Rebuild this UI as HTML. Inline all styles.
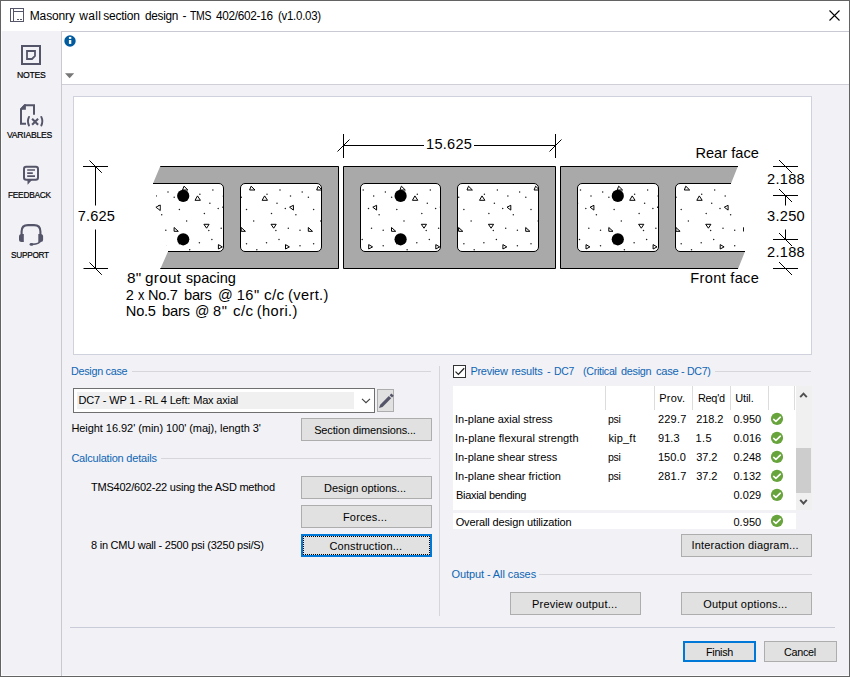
<!DOCTYPE html><html><head><meta charset="utf-8"><title>Masonry wall section design</title><style>

html,body{margin:0;padding:0}
body{width:850px;height:677px;overflow:hidden;background:#f1f1f6;font-family:"Liberation Sans",sans-serif;color:#000;position:relative}
.a{position:absolute}
.t{position:absolute;white-space:pre;font-family:"Liberation Sans",sans-serif;font-size:11px;transform-origin:0 50%}
.btn{position:absolute;box-sizing:border-box;background:#e1e1e1;border:1px solid #adadad}
.btn.def{border:2px solid #0078d7}
.hl{position:absolute;height:1px;background:#d6d6db}
.vl{position:absolute;width:1px;background:#d0d0d8}
svg{position:absolute;left:0;top:0;overflow:visible}

</style></head><body>
<div class="a" style="left:0;top:0;width:850px;height:677px;box-sizing:border-box;border:1px solid #636363"></div>
<div class="a" style="left:1px;top:1px;width:848px;height:30px;background:#fff"></div>
<div class="a" style="left:1px;top:31px;width:1px;height:645px;background:#fbfbfd"></div>
<div class="a" style="left:1px;top:675px;width:848px;height:1px;background:#fbfbfd"></div>
<div class="a" style="left:61px;top:31px;width:1px;height:645px;background:#c9c9d3"></div>
<div class="a" style="left:62px;top:31px;width:787px;height:54px;background:#fff;box-sizing:border-box;border-top:1px solid #c9c9d3;border-bottom:1px solid #cfcfd8"></div>
<div class="a" style="left:73px;top:96px;width:739px;height:259px;background:#fff;box-sizing:border-box;border:1px solid #cfd1dc"></div>
<div class="hl" style="left:132px;top:371px;width:299px"></div>
<div class="hl" style="left:161px;top:458px;width:270px"></div>
<div class="hl" style="left:715px;top:371px;width:96px"></div>
<div class="hl" style="left:539px;top:574px;width:273px"></div>
<div class="hl" style="left:70px;top:627px;width:765px;background:#c9cbd8"></div>
<div class="vl" style="left:439px;top:366px;height:250px;background:#d6d6da"></div>
<div class="a" style="left:73px;top:388px;width:302px;height:25px;box-sizing:border-box;border:1px solid #6f6f6f;background:#fff"></div>
<div class="a" style="left:77px;top:392px;width:277px;height:17px;background:#f0f0f0"></div>
<div class="btn " style="left:377px;top:389px;width:17px;height:23px"></div>
<div class="btn " style="left:301px;top:418px;width:131px;height:23px"></div>
<div class="btn " style="left:301px;top:476px;width:131px;height:23px"></div>
<div class="btn " style="left:301px;top:505px;width:131px;height:23px"></div>
<div class="btn def" style="left:301px;top:534px;width:131px;height:23px"></div>
<div class="a" style="left:303px;top:536px;width:127px;height:19px;box-sizing:border-box;border:1px dotted #000"></div>
<div class="btn " style="left:681px;top:534px;width:131px;height:23px"></div>
<div class="btn " style="left:510px;top:592px;width:131px;height:23px"></div>
<div class="btn " style="left:681px;top:592px;width:131px;height:23px"></div>
<div class="btn def" style="left:683px;top:641px;width:73px;height:21px"></div>
<div class="btn " style="left:764px;top:641px;width:73px;height:21px"></div>
<div class="a" style="left:453px;top:365px;width:13px;height:13px;box-sizing:border-box;border:1px solid #333;background:#fff"></div>
<div class="a" style="left:453px;top:386px;width:343px;height:124px;background:#fff"></div>
<div class="a" style="left:796px;top:386px;width:16px;height:124px;background:#f0f0f0"></div>
<div class="a" style="left:796px;top:448px;width:15px;height:45px;background:#cdcdcd"></div>
<div class="a" style="left:453px;top:513px;width:343px;height:16px;background:#fff"></div>
<div class="a" style="left:605px;top:386px;width:1px;height:24px;background:#dcdcdc"></div>
<div class="a" style="left:654px;top:386px;width:1px;height:24px;background:#dcdcdc"></div>
<div class="a" style="left:692px;top:386px;width:1px;height:24px;background:#dcdcdc"></div>
<div class="a" style="left:730px;top:386px;width:1px;height:24px;background:#dcdcdc"></div>
<div class="a" style="left:768px;top:386px;width:1px;height:24px;background:#dcdcdc"></div>
<div class="a" style="left:794px;top:386px;width:1px;height:24px;background:#dcdcdc"></div>
<svg width="850" height="677" viewBox="0 0 850 677">
<defs>
<clipPath id="k11"><path d="M153.5,184 L223,184 L223,251 L168,251 Z"/></clipPath>
<clipPath id="k12"><path d="M245.0,183.5 L317.0,183.5 A4.5,4.5 0 0 1 321.5,188.0 L321.5,247.0 A4.5,4.5 0 0 1 317.0,251.5 L245.0,251.5 A4.5,4.5 0 0 1 240.5,247.0 L240.5,188.0 A4.5,4.5 0 0 1 245.0,183.5 Z"/></clipPath>
<clipPath id="k21"><path d="M365.0,183.5 L436.0,183.5 A4.5,4.5 0 0 1 440.5,188.0 L440.5,247.0 A4.5,4.5 0 0 1 436.0,251.5 L365.0,251.5 A4.5,4.5 0 0 1 360.5,247.0 L360.5,188.0 A4.5,4.5 0 0 1 365.0,183.5 Z"/></clipPath>
<clipPath id="k22"><path d="M462.0,183.5 L534.0,183.5 A4.5,4.5 0 0 1 538.5,188.0 L538.5,247.0 A4.5,4.5 0 0 1 534.0,251.5 L462.0,251.5 A4.5,4.5 0 0 1 457.5,247.0 L457.5,188.0 A4.5,4.5 0 0 1 462.0,183.5 Z"/></clipPath>
<clipPath id="k31"><path d="M582.0,183.5 L654.0,183.5 A4.5,4.5 0 0 1 658.5,188.0 L658.5,247.0 A4.5,4.5 0 0 1 654.0,251.5 L582.0,251.5 A4.5,4.5 0 0 1 577.5,247.0 L577.5,188.0 A4.5,4.5 0 0 1 582.0,183.5 Z"/></clipPath>
<clipPath id="k32"><path d="M676,184 L731,184 L745,251 L676,251 Z"/></clipPath>
</defs>
<path d="M160.3,166 L339,166 L339,269 L160.3,269 L168,251.5 L153,183.5 Z" fill="#a9a9a9"/>
<path d="M140,183.5 L219,183.5 A4.5,4.5 0 0 1 223.5,188 L223.5,247 A4.5,4.5 0 0 1 219,251.5 L140,251.5 Z" fill="#fff"/>
<path d="M245.0,183.5 L317.0,183.5 A4.5,4.5 0 0 1 321.5,188.0 L321.5,247.0 A4.5,4.5 0 0 1 317.0,251.5 L245.0,251.5 A4.5,4.5 0 0 1 240.5,247.0 L240.5,188.0 A4.5,4.5 0 0 1 245.0,183.5 Z" fill="#fff"/>
<rect x="343.5" y="166.5" width="212" height="102" fill="#a9a9a9"/>
<path d="M365.0,183.5 L436.0,183.5 A4.5,4.5 0 0 1 440.5,188.0 L440.5,247.0 A4.5,4.5 0 0 1 436.0,251.5 L365.0,251.5 A4.5,4.5 0 0 1 360.5,247.0 L360.5,188.0 A4.5,4.5 0 0 1 365.0,183.5 Z M462.0,183.5 L534.0,183.5 A4.5,4.5 0 0 1 538.5,188.0 L538.5,247.0 A4.5,4.5 0 0 1 534.0,251.5 L462.0,251.5 A4.5,4.5 0 0 1 457.5,247.0 L457.5,188.0 A4.5,4.5 0 0 1 462.0,183.5 Z" fill="#fff"/>
<path d="M560,166 L738,166 L731,183.5 L745,251.5 L738,269 L560,269 Z" fill="#a9a9a9"/>
<path d="M582.0,183.5 L654.0,183.5 A4.5,4.5 0 0 1 658.5,188.0 L658.5,247.0 A4.5,4.5 0 0 1 654.0,251.5 L582.0,251.5 A4.5,4.5 0 0 1 577.5,247.0 L577.5,188.0 A4.5,4.5 0 0 1 582.0,183.5 Z" fill="#fff"/>
<path d="M680,183.5 L770,183.5 L770,251.5 L680,251.5 A4.5,4.5 0 0 1 675.5,247 L675.5,188 A4.5,4.5 0 0 1 680,183.5 Z" fill="#fff"/>
<g clip-path="url(#k11)"><g fill="#222"><circle cx="168.0" cy="191.9" r="0.75"/><circle cx="156.3" cy="196.1" r="0.75"/><circle cx="151.1" cy="208.5" r="0.75"/><circle cx="161.7" cy="214.7" r="0.75"/><circle cx="154.1" cy="228.2" r="0.75"/><circle cx="165.8" cy="230.2" r="0.75"/><circle cx="165.8" cy="245.7" r="0.75"/><circle cx="212.9" cy="190.0" r="0.75"/><circle cx="223.4" cy="196.1" r="0.75"/><circle cx="174.2" cy="197.2" r="0.75"/><circle cx="209.9" cy="203.3" r="0.75"/><circle cx="218.2" cy="208.5" r="0.75"/><circle cx="179.4" cy="209.6" r="0.75"/><circle cx="204.4" cy="213.6" r="0.75"/><circle cx="186.6" cy="221.0" r="0.75"/><circle cx="221.2" cy="228.2" r="0.75"/><circle cx="208.8" cy="230.4" r="0.75"/><circle cx="211.9" cy="239.5" r="0.75"/><circle cx="199.4" cy="242.8" r="0.75"/><circle cx="179.4" cy="243.7" r="0.75"/><circle cx="189.7" cy="249.8" r="0.75"/><circle cx="199.9" cy="194.2" r="0.75"/></g><g fill="#fff" stroke="#000" stroke-width="1"><path d="M155.4,207.2 L159.2,205.3 L159.2,210.1 Z"/><path d="M151.3,244.6 L151.3,249.0 L155.2,246.9 Z"/><path d="M182.5,190.0 L187.9,190.0 L184.0,186.2 Z"/><path d="M195.0,200.3 L200.4,200.3 L197.5,195.9 Z"/><path d="M222.5,207.2 L226.3,205.3 L226.3,210.1 Z"/><path d="M203.9,224.3 L209.1,224.3 L206.6,228.2 Z"/><path d="M174.1,231.3 L178.3,231.3 L174.1,227.5 Z"/><path d="M218.4,244.6 L218.4,249.0 L222.3,246.9 Z"/></g></g>
<g clip-path="url(#k12)"><g fill="#222"><circle cx="280.0" cy="190.0" r="0.75"/><circle cx="302.2" cy="191.9" r="0.75"/><circle cx="290.5" cy="196.1" r="0.75"/><circle cx="241.3" cy="197.2" r="0.75"/><circle cx="277.0" cy="203.3" r="0.75"/><circle cx="285.3" cy="208.5" r="0.75"/><circle cx="246.5" cy="209.6" r="0.75"/><circle cx="271.5" cy="213.6" r="0.75"/><circle cx="295.9" cy="214.7" r="0.75"/><circle cx="253.7" cy="221.0" r="0.75"/><circle cx="288.3" cy="228.2" r="0.75"/><circle cx="275.9" cy="230.4" r="0.75"/><circle cx="300.0" cy="230.2" r="0.75"/><circle cx="279.0" cy="239.5" r="0.75"/><circle cx="266.5" cy="242.8" r="0.75"/><circle cx="246.5" cy="243.7" r="0.75"/><circle cx="300.0" cy="245.7" r="0.75"/><circle cx="256.8" cy="249.8" r="0.75"/><circle cx="267.0" cy="194.2" r="0.75"/><circle cx="308.4" cy="197.2" r="0.75"/><circle cx="313.6" cy="209.6" r="0.75"/><circle cx="320.8" cy="221.0" r="0.75"/><circle cx="313.6" cy="243.7" r="0.75"/></g><g fill="#fff" stroke="#000" stroke-width="1"><path d="M249.6,190.0 L255.0,190.0 L251.1,186.2 Z"/><path d="M262.1,200.3 L267.5,200.3 L264.6,195.9 Z"/><path d="M289.6,207.2 L293.4,205.3 L293.4,210.1 Z"/><path d="M271.0,224.3 L276.2,224.3 L273.7,228.2 Z"/><path d="M241.2,231.3 L245.4,231.3 L241.2,227.5 Z"/><path d="M285.5,244.6 L285.5,249.0 L289.4,246.9 Z"/><path d="M316.7,190.0 L322.1,190.0 L318.2,186.2 Z"/><path d="M308.3,231.3 L312.5,231.3 L308.3,227.5 Z"/></g></g>
<g clip-path="url(#k21)"><g fill="#222"><circle cx="363.2" cy="190.0" r="0.75"/><circle cx="385.4" cy="191.9" r="0.75"/><circle cx="373.7" cy="196.1" r="0.75"/><circle cx="360.2" cy="203.3" r="0.75"/><circle cx="368.5" cy="208.5" r="0.75"/><circle cx="379.1" cy="214.7" r="0.75"/><circle cx="371.5" cy="228.2" r="0.75"/><circle cx="359.1" cy="230.4" r="0.75"/><circle cx="383.2" cy="230.2" r="0.75"/><circle cx="362.2" cy="239.5" r="0.75"/><circle cx="383.2" cy="245.7" r="0.75"/><circle cx="430.3" cy="190.0" r="0.75"/><circle cx="440.8" cy="196.1" r="0.75"/><circle cx="391.6" cy="197.2" r="0.75"/><circle cx="427.3" cy="203.3" r="0.75"/><circle cx="435.6" cy="208.5" r="0.75"/><circle cx="396.8" cy="209.6" r="0.75"/><circle cx="421.8" cy="213.6" r="0.75"/><circle cx="404.0" cy="221.0" r="0.75"/><circle cx="438.6" cy="228.2" r="0.75"/><circle cx="426.2" cy="230.4" r="0.75"/><circle cx="429.3" cy="239.5" r="0.75"/><circle cx="416.8" cy="242.8" r="0.75"/><circle cx="396.8" cy="243.7" r="0.75"/><circle cx="407.1" cy="249.8" r="0.75"/><circle cx="417.3" cy="194.2" r="0.75"/></g><g fill="#fff" stroke="#000" stroke-width="1"><path d="M372.8,207.2 L376.6,205.3 L376.6,210.1 Z"/><path d="M368.7,244.6 L368.7,249.0 L372.6,246.9 Z"/><path d="M399.9,190.0 L405.3,190.0 L401.4,186.2 Z"/><path d="M412.4,200.3 L417.8,200.3 L414.9,195.9 Z"/><path d="M439.9,207.2 L443.7,205.3 L443.7,210.1 Z"/><path d="M421.3,224.3 L426.5,224.3 L424.0,228.2 Z"/><path d="M391.5,231.3 L395.7,231.3 L391.5,227.5 Z"/><path d="M435.8,244.6 L435.8,249.0 L439.7,246.9 Z"/></g></g>
<g clip-path="url(#k22)"><g fill="#222"><circle cx="497.4" cy="190.0" r="0.75"/><circle cx="519.6" cy="191.9" r="0.75"/><circle cx="507.9" cy="196.1" r="0.75"/><circle cx="458.7" cy="197.2" r="0.75"/><circle cx="494.4" cy="203.3" r="0.75"/><circle cx="502.7" cy="208.5" r="0.75"/><circle cx="463.9" cy="209.6" r="0.75"/><circle cx="488.9" cy="213.6" r="0.75"/><circle cx="513.3" cy="214.7" r="0.75"/><circle cx="471.1" cy="221.0" r="0.75"/><circle cx="505.7" cy="228.2" r="0.75"/><circle cx="493.3" cy="230.4" r="0.75"/><circle cx="517.4" cy="230.2" r="0.75"/><circle cx="496.4" cy="239.5" r="0.75"/><circle cx="483.9" cy="242.8" r="0.75"/><circle cx="463.9" cy="243.7" r="0.75"/><circle cx="517.4" cy="245.7" r="0.75"/><circle cx="474.2" cy="249.8" r="0.75"/><circle cx="484.4" cy="194.2" r="0.75"/><circle cx="525.8" cy="197.2" r="0.75"/><circle cx="531.0" cy="209.6" r="0.75"/><circle cx="538.2" cy="221.0" r="0.75"/><circle cx="531.0" cy="243.7" r="0.75"/></g><g fill="#fff" stroke="#000" stroke-width="1"><path d="M467.0,190.0 L472.4,190.0 L468.5,186.2 Z"/><path d="M479.5,200.3 L484.9,200.3 L482.0,195.9 Z"/><path d="M507.0,207.2 L510.8,205.3 L510.8,210.1 Z"/><path d="M488.4,224.3 L493.6,224.3 L491.1,228.2 Z"/><path d="M458.6,231.3 L462.8,231.3 L458.6,227.5 Z"/><path d="M502.9,244.6 L502.9,249.0 L506.8,246.9 Z"/><path d="M534.1,190.0 L539.5,190.0 L535.6,186.2 Z"/><path d="M525.7,231.3 L529.9,231.3 L525.7,227.5 Z"/></g></g>
<g clip-path="url(#k31)"><g fill="#222"><circle cx="580.5" cy="190.0" r="0.75"/><circle cx="602.7" cy="191.9" r="0.75"/><circle cx="591.0" cy="196.1" r="0.75"/><circle cx="577.5" cy="203.3" r="0.75"/><circle cx="585.8" cy="208.5" r="0.75"/><circle cx="596.4" cy="214.7" r="0.75"/><circle cx="588.8" cy="228.2" r="0.75"/><circle cx="576.4" cy="230.4" r="0.75"/><circle cx="600.5" cy="230.2" r="0.75"/><circle cx="579.5" cy="239.5" r="0.75"/><circle cx="600.5" cy="245.7" r="0.75"/><circle cx="647.6" cy="190.0" r="0.75"/><circle cx="658.1" cy="196.1" r="0.75"/><circle cx="608.9" cy="197.2" r="0.75"/><circle cx="644.6" cy="203.3" r="0.75"/><circle cx="652.9" cy="208.5" r="0.75"/><circle cx="614.1" cy="209.6" r="0.75"/><circle cx="639.1" cy="213.6" r="0.75"/><circle cx="621.3" cy="221.0" r="0.75"/><circle cx="655.9" cy="228.2" r="0.75"/><circle cx="643.5" cy="230.4" r="0.75"/><circle cx="646.6" cy="239.5" r="0.75"/><circle cx="634.1" cy="242.8" r="0.75"/><circle cx="614.1" cy="243.7" r="0.75"/><circle cx="624.4" cy="249.8" r="0.75"/><circle cx="634.6" cy="194.2" r="0.75"/></g><g fill="#fff" stroke="#000" stroke-width="1"><path d="M590.1,207.2 L593.9,205.3 L593.9,210.1 Z"/><path d="M586.0,244.6 L586.0,249.0 L589.9,246.9 Z"/><path d="M617.2,190.0 L622.6,190.0 L618.7,186.2 Z"/><path d="M629.7,200.3 L635.1,200.3 L632.2,195.9 Z"/><path d="M657.2,207.2 L661.0,205.3 L661.0,210.1 Z"/><path d="M638.6,224.3 L643.8,224.3 L641.3,228.2 Z"/><path d="M608.8,231.3 L613.0,231.3 L608.8,227.5 Z"/><path d="M653.1,244.6 L653.1,249.0 L657.0,246.9 Z"/></g></g>
<g clip-path="url(#k32)"><g fill="#222"><circle cx="714.7" cy="190.0" r="0.75"/><circle cx="736.9" cy="191.9" r="0.75"/><circle cx="725.2" cy="196.1" r="0.75"/><circle cx="676.0" cy="197.2" r="0.75"/><circle cx="711.7" cy="203.3" r="0.75"/><circle cx="720.0" cy="208.5" r="0.75"/><circle cx="681.2" cy="209.6" r="0.75"/><circle cx="706.2" cy="213.6" r="0.75"/><circle cx="730.6" cy="214.7" r="0.75"/><circle cx="688.4" cy="221.0" r="0.75"/><circle cx="723.0" cy="228.2" r="0.75"/><circle cx="710.6" cy="230.4" r="0.75"/><circle cx="734.7" cy="230.2" r="0.75"/><circle cx="713.7" cy="239.5" r="0.75"/><circle cx="701.2" cy="242.8" r="0.75"/><circle cx="681.2" cy="243.7" r="0.75"/><circle cx="734.7" cy="245.7" r="0.75"/><circle cx="691.5" cy="249.8" r="0.75"/><circle cx="701.7" cy="194.2" r="0.75"/><circle cx="743.1" cy="197.2" r="0.75"/></g><g fill="#fff" stroke="#000" stroke-width="1"><path d="M684.3,190.0 L689.7,190.0 L685.8,186.2 Z"/><path d="M696.8,200.3 L702.2,200.3 L699.3,195.9 Z"/><path d="M724.3,207.2 L728.1,205.3 L728.1,210.1 Z"/><path d="M705.7,224.3 L710.9,224.3 L708.4,228.2 Z"/><path d="M675.9,231.3 L680.1,231.3 L675.9,227.5 Z"/><path d="M720.2,244.6 L720.2,249.0 L724.1,246.9 Z"/><path d="M743.0,231.3 L747.2,231.3 L743.0,227.5 Z"/></g></g>
<path d="M155.9,207.2 L160.3,205 L160.3,210.5 Z" fill="#fff" stroke="#000" stroke-width="0.9"/>
<path d="M743.5,227.3 V231.5" stroke="#000" stroke-width="0.9"/>
<path d="M160.3,166.5 L338.5,166.5 L338.5,268.5 L160.3,268.5 M153,183.5 L219,183.5 A4.5,4.5 0 0 1 223.5,188 L223.5,247 A4.5,4.5 0 0 1 219,251.5 L168,251.5 M245.0,183.5 L317.0,183.5 A4.5,4.5 0 0 1 321.5,188.0 L321.5,247.0 A4.5,4.5 0 0 1 317.0,251.5 L245.0,251.5 A4.5,4.5 0 0 1 240.5,247.0 L240.5,188.0 A4.5,4.5 0 0 1 245.0,183.5 Z M343.5,166.5 H555.5 V268.5 H343.5 Z M365.0,183.5 L436.0,183.5 A4.5,4.5 0 0 1 440.5,188.0 L440.5,247.0 A4.5,4.5 0 0 1 436.0,251.5 L365.0,251.5 A4.5,4.5 0 0 1 360.5,247.0 L360.5,188.0 A4.5,4.5 0 0 1 365.0,183.5 Z M462.0,183.5 L534.0,183.5 A4.5,4.5 0 0 1 538.5,188.0 L538.5,247.0 A4.5,4.5 0 0 1 534.0,251.5 L462.0,251.5 A4.5,4.5 0 0 1 457.5,247.0 L457.5,188.0 A4.5,4.5 0 0 1 462.0,183.5 Z M738,166.5 L560.5,166.5 L560.5,268.5 L738,268.5 M582.0,183.5 L654.0,183.5 A4.5,4.5 0 0 1 658.5,188.0 L658.5,247.0 A4.5,4.5 0 0 1 654.0,251.5 L582.0,251.5 A4.5,4.5 0 0 1 577.5,247.0 L577.5,188.0 A4.5,4.5 0 0 1 582.0,183.5 Z M731,183.5 L680,183.5 A4.5,4.5 0 0 0 675.5,188 L675.5,247 A4.5,4.5 0 0 0 680,251.5 L745,251.5" fill="none" stroke="#000" stroke-width="1"/>
<circle cx="183.2" cy="195.9" r="6.1" fill="#000"/><circle cx="183.2" cy="239.3" r="6.1" fill="#000"/>
<circle cx="400.6" cy="195.9" r="6.1" fill="#000"/><circle cx="400.6" cy="239.3" r="6.1" fill="#000"/>
<circle cx="617.8" cy="195.9" r="6.1" fill="#000"/><circle cx="617.8" cy="239.3" r="6.1" fill="#000"/>
<g stroke="#000" stroke-width="1" fill="none"><path d="M343.5,134.0 L343.5,158.0"/><path d="M555.5,134.0 L555.5,158.0"/><path d="M343.5,145.5 L424.0,145.5"/><path d="M474.0,145.5 L555.5,145.5"/><path d="M337.5,151.5 L349.5,139.5"/><path d="M549.5,151.5 L561.5,139.5"/><path d="M83.0,166.5 L108.0,166.5"/><path d="M83.5,268.5 L108.0,268.5"/><path d="M95.5,166.5 L95.5,205.5"/><path d="M95.5,229.5 L95.5,268.5"/><path d="M89.5,160.5 L101.8,172.8"/><path d="M89.5,262.5 L101.8,274.8"/><path d="M773.0,166.5 L798.0,166.5"/><path d="M779.0,160.0 L792.0,173.0"/><path d="M773.0,195.5 L798.0,195.5"/><path d="M779.0,189.0 L792.0,202.0"/><path d="M773.0,239.5 L798.0,239.5"/><path d="M779.0,233.0 L792.0,246.0"/><path d="M773.0,268.5 L798.0,268.5"/><path d="M779.0,262.0 L792.0,275.0"/><path d="M785.5,195.5 L785.5,205.5"/><path d="M785.5,229.5 L785.5,239.5"/></g>
<g fill="none" stroke="#55556a" stroke-width="1"><rect x="10.5" y="8.5" width="13" height="13"/><path d="M13.5,8.5 V21.5 M13.5,11.5 H23.5"/><path d="M17,19.5 H19 M20,19.5 H22" stroke-width="1"/></g>
<path d="M829.5,10.5 L839.5,20.5 M839.5,10.5 L829.5,20.5" stroke="#000" stroke-width="1.1" fill="none"/>
<circle cx="70" cy="41" r="5.7" fill="#005a9e"/><rect x="68.9" y="40" width="2.4" height="3.9" fill="#fff"/><rect x="68.9" y="36.9" width="2.4" height="2" fill="#fff"/>
<path d="M65,73.3 H74.2 L69.6,78.2 Z" fill="#777"/>
<g fill="none" stroke="#55556a" stroke-width="2"><rect x="22" y="46" width="18" height="18"/><path d="M27,51 H35 V56 L32,59 H27 Z" stroke-width="1.8"/></g>
<g fill="none" stroke="#55556a" stroke-width="2"><path d="M34,114.8 V105.2 H25 L21,109.3 V123.8 H26"/><path d="M20.1,108.7 L24.3,104.2 H25.9 V109.8 H20.1 Z" fill="#55556a" stroke="none"/></g>
<g fill="none" stroke="#55556a" stroke-linecap="round"><path d="M29,116.9 Q26.9,121.2 29,125.5" stroke-width="1.9"/><path d="M41.3,116.9 Q43.4,121.2 41.3,125.5" stroke-width="1.9"/><path d="M32.1,118.7 L38.1,124.7 M38.1,118.7 L32.1,124.7" stroke-width="2.1" stroke-linecap="butt"/></g>
<g fill="none" stroke="#55556a" stroke-width="2"><rect x="24" y="166.8" width="14" height="13" rx="2.2"/><path d="M27.2,170 H35 M27.2,173.1 H32.8 M27.2,176.2 H35" stroke-width="1.7"/><path d="M27.4,180 H32 L27.6,184.8 Z" fill="#55556a" stroke="none"/></g>
<g fill="none" stroke="#55556a" stroke-width="2.1"><path d="M21.6,235 V231.5 Q21.6,225.1 28,225.1 H34 Q40.4,225.1 40.4,231.5 V235"/><path d="M40.3,240.5 Q40,244 32,244.4" stroke-linecap="round" stroke-width="1.8"/></g>
<g fill="#55556a"><path d="M23.8,233.9 V241.9 H21.5 Q19,241.9 19,239.4 V236.4 Q19,233.9 21.5,233.9 Z"/><path d="M38.3,233.9 V241.9 H40.6 Q43.1,241.9 43.1,239.4 V236.4 Q43.1,233.9 40.6,233.9 Z"/><ellipse cx="31.4" cy="244.4" rx="1.9" ry="1.3"/></g>
<path d="M362,398.8 L366,402.7 L370,398.8" fill="none" stroke="#404040" stroke-width="1.1"/>
<g fill="#55556a"><path d="M379,408 L380.2,404.7 L388.8,396.0 L391.2,398.3 L382.5,406.9 Z"/><path d="M389.6,395.2 L391.4,393.4 L393.8,395.8 L392,397.6 Z"/></g>
<path d="M455.5,371.6 L458.4,374.4 L464.2,368.3" fill="none" stroke="#222" stroke-width="1.3"/>
<path d="M800.2,397.2 L803.5,393.6 L806.8,397.2" fill="none" stroke="#505050" stroke-width="1.9"/>
<path d="M800.2,499.9 L803.5,503.5 L806.8,499.9" fill="none" stroke="#505050" stroke-width="1.9"/>
<g transform="translate(777.0,418.9)"><circle r="6.1" fill="#68a43c"/><path d="M-3.3,0.5 L-1.1,2.4 L3.3,-1.7" fill="none" stroke="#fff" stroke-width="1.6" stroke-linecap="round" stroke-linejoin="round"/></g>
<g transform="translate(777.0,437.9)"><circle r="6.1" fill="#68a43c"/><path d="M-3.3,0.5 L-1.1,2.4 L3.3,-1.7" fill="none" stroke="#fff" stroke-width="1.6" stroke-linecap="round" stroke-linejoin="round"/></g>
<g transform="translate(777.0,456.9)"><circle r="6.1" fill="#68a43c"/><path d="M-3.3,0.5 L-1.1,2.4 L3.3,-1.7" fill="none" stroke="#fff" stroke-width="1.6" stroke-linecap="round" stroke-linejoin="round"/></g>
<g transform="translate(777.0,475.9)"><circle r="6.1" fill="#68a43c"/><path d="M-3.3,0.5 L-1.1,2.4 L3.3,-1.7" fill="none" stroke="#fff" stroke-width="1.6" stroke-linecap="round" stroke-linejoin="round"/></g>
<g transform="translate(777.0,494.9)"><circle r="6.1" fill="#68a43c"/><path d="M-3.3,0.5 L-1.1,2.4 L3.3,-1.7" fill="none" stroke="#fff" stroke-width="1.6" stroke-linecap="round" stroke-linejoin="round"/></g>
<g transform="translate(777.0,520.9)"><circle r="6.1" fill="#68a43c"/><path d="M-3.3,0.5 L-1.1,2.4 L3.3,-1.7" fill="none" stroke="#fff" stroke-width="1.6" stroke-linecap="round" stroke-linejoin="round"/></g>
</svg>
<span class="t" id="t0" style="left:29.76px;top:9px;font-size:12px;line-height:14px;letter-spacing:-0.129px;">Masonry</span>
<span class="t" id="t1" style="left:79.31px;top:9px;font-size:12px;line-height:14px;letter-spacing:0.316px;">wall</span>
<span class="t" id="t2" style="left:103.15px;top:9px;font-size:12px;line-height:14px;letter-spacing:-0.197px;">section</span>
<span class="t" id="t3" style="left:145.23px;top:9px;font-size:12px;line-height:14px;letter-spacing:-0.300px;transform:scaleX(0.9861);">design</span>
<span class="t" id="t4" style="left:182.54px;top:9px;font-size:12px;line-height:14px;letter-spacing:1.010px;">-</span>
<span class="t" id="t5" style="left:190.38px;top:9px;font-size:12px;line-height:14px;letter-spacing:-0.300px;transform:scaleX(0.8711);">TMS</span>
<span class="t" id="t6" style="left:216.23px;top:9px;font-size:12px;line-height:14px;letter-spacing:-0.300px;transform:scaleX(0.9837);">402/602-16</span>
<span class="t" id="t7" style="left:278.31px;top:9px;font-size:12px;line-height:14px;letter-spacing:-0.300px;transform:scaleX(0.9584);">(v1.0.03)</span>
<span class="t" id="t8" style="left:16.62px;top:69px;font-size:9.8px;line-height:11px;letter-spacing:-0.300px;transform:scaleX(0.8842);-webkit-text-stroke:0.2px #000;">NOTES</span>
<span class="t" id="t9" style="left:7.23px;top:129px;font-size:9.8px;line-height:11px;letter-spacing:-0.300px;transform:scaleX(0.8812);-webkit-text-stroke:0.2px #000;">VARIABLES</span>
<span class="t" id="t10" style="left:8.23px;top:189px;font-size:9.8px;line-height:11px;letter-spacing:-0.300px;transform:scaleX(0.8494);-webkit-text-stroke:0.2px #000;">FEEDBACK</span>
<span class="t" id="t11" style="left:10.69px;top:249px;font-size:9.8px;line-height:11px;letter-spacing:-0.300px;transform:scaleX(0.8390);-webkit-text-stroke:0.2px #000;">SUPPORT</span>
<span class="t" id="t12" style="left:426.07px;top:136px;font-size:14.6px;line-height:16px;letter-spacing:0.258px;">15.625</span>
<span class="t" id="t13" style="left:77.69px;top:208px;font-size:14.6px;line-height:16px;letter-spacing:0.157px;">7.625</span>
<span class="t" id="t14" style="left:767.00px;top:171px;font-size:14.6px;line-height:16px;letter-spacing:0.290px;">2.188</span>
<span class="t" id="t15" style="left:767.00px;top:208px;font-size:14.6px;line-height:16px;letter-spacing:0.290px;">3.250</span>
<span class="t" id="t16" style="left:767.00px;top:244px;font-size:14.6px;line-height:16px;letter-spacing:0.290px;">2.188</span>
<span class="t" id="t17" style="left:695.45px;top:145px;font-size:14.6px;line-height:16px;letter-spacing:0.015px;">Rear face</span>
<span class="t" id="t18" style="left:690.30px;top:270px;font-size:14.6px;line-height:16px;letter-spacing:0.316px;">Front face</span>
<span class="t" id="t19" style="left:126.54px;top:270px;font-size:14.6px;line-height:16px;letter-spacing:0.300px;transform:scaleX(1.0526);">8"</span>
<span class="t" id="t20" style="left:144.77px;top:270px;font-size:14.6px;line-height:16px;letter-spacing:0.300px;transform:scaleX(1.0468);">grout</span>
<span class="t" id="t21" style="left:185.77px;top:270px;font-size:14.6px;line-height:16px;letter-spacing:-0.025px;">spacing</span>
<span class="t" id="t22" style="left:125.84px;top:287px;font-size:14.6px;line-height:16px;letter-spacing:2.515px;">2</span>
<span class="t" id="t23" style="left:138.46px;top:287px;font-size:14.6px;line-height:16px;letter-spacing:-0.300px;transform:scaleX(0.8771);">x</span>
<span class="t" id="t24" style="left:148.14px;top:287px;font-size:14.6px;line-height:16px;letter-spacing:-0.300px;transform:scaleX(0.9963);">No.7</span>
<span class="t" id="t25" style="left:184.37px;top:287px;font-size:14.6px;line-height:16px;letter-spacing:-0.300px;transform:scaleX(1.0120);">bars</span>
<span class="t" id="t26" style="left:217.76px;top:287px;font-size:14.6px;line-height:16px;letter-spacing:-0.300px;transform:scaleX(0.9962);">@</span>
<span class="t" id="t27" style="left:236.76px;top:287px;font-size:14.6px;line-height:16px;letter-spacing:0.449px;">16"</span>
<span class="t" id="t28" style="left:263.77px;top:287px;font-size:14.6px;line-height:16px;letter-spacing:0.300px;transform:scaleX(1.0548);">c/c</span>
<span class="t" id="t29" style="left:288.07px;top:287px;font-size:14.6px;line-height:16px;letter-spacing:0.368px;">(vert.)</span>
<span class="t" id="t30" style="left:125.84px;top:303px;font-size:14.6px;line-height:16px;letter-spacing:-0.223px;">No.5</span>
<span class="t" id="t31" style="left:161.91px;top:303px;font-size:14.6px;line-height:16px;letter-spacing:-0.300px;transform:scaleX(1.0203);">bars</span>
<span class="t" id="t32" style="left:195.22px;top:303px;font-size:14.6px;line-height:16px;letter-spacing:-0.300px;transform:scaleX(0.9719);">@</span>
<span class="t" id="t33" style="left:212.92px;top:303px;font-size:14.6px;line-height:16px;letter-spacing:0.783px;">8"</span>
<span class="t" id="t34" style="left:232.62px;top:303px;font-size:14.6px;line-height:16px;letter-spacing:0.300px;transform:scaleX(1.0438);">c/c</span>
<span class="t" id="t35" style="left:256.84px;top:303px;font-size:14.6px;line-height:16px;letter-spacing:0.407px;">(hori.)</span>
<span class="t" id="t36" style="left:71.38px;top:365px;line-height:12px;color:#0f66b4;letter-spacing:-0.300px;transform:scaleX(0.9826);">Design case</span>
<span class="t" id="t37" style="left:78.38px;top:394px;line-height:12px;letter-spacing:-0.160px;">DC7 - WP 1 - RL 4 Left: Max axial</span>
<span class="t" id="t38" style="left:71.38px;top:422px;line-height:12px;letter-spacing:-0.051px;">Height 16.92' (min) 100' (maj), length 3'</span>
<span class="t" id="t39" style="left:314.15px;top:424px;line-height:12px;letter-spacing:-0.139px;">Section dimensions...</span>
<span class="t" id="t40" style="left:71.38px;top:452px;line-height:12px;color:#0f66b4;letter-spacing:-0.208px;">Calculation details</span>
<span class="t" id="t41" style="left:91.00px;top:481px;line-height:12px;letter-spacing:-0.224px;">TMS402/602-22 using the ASD method</span>
<span class="t" id="t42" style="left:324.00px;top:482px;line-height:12px;letter-spacing:0.004px;">Design options...</span>
<span class="t" id="t43" style="left:343.00px;top:511px;line-height:12px;letter-spacing:0.150px;">Forces...</span>
<span class="t" id="t44" style="left:91.00px;top:539px;line-height:12px;letter-spacing:-0.238px;">8 in CMU wall - 2500 psi (3250 psi/S)</span>
<span class="t" id="t45" style="left:329.54px;top:540px;line-height:12px;letter-spacing:0.116px;">Construction...</span>
<span class="t" id="t46" style="left:470.46px;top:365px;line-height:12px;color:#0f66b4;letter-spacing:-0.291px;">Preview</span>
<span class="t" id="t47" style="left:511.38px;top:365px;line-height:12px;color:#0f66b4;letter-spacing:-0.183px;">results</span>
<span class="t" id="t48" style="left:547.46px;top:365px;line-height:12px;color:#0f66b4;letter-spacing:-0.272px;transform:scaleX(0.9906);">-</span>
<span class="t" id="t49" style="left:554.00px;top:365px;line-height:12px;color:#0f66b4;letter-spacing:-0.300px;transform:scaleX(0.9485);">DC7</span>
<span class="t" id="t50" style="left:583.15px;top:365px;line-height:12px;color:#0f66b4;letter-spacing:-0.300px;transform:scaleX(0.9730);">(Critical</span>
<span class="t" id="t51" style="left:620.77px;top:365px;line-height:12px;color:#0f66b4;letter-spacing:-0.300px;transform:scaleX(0.9904);">design</span>
<span class="t" id="t52" style="left:655.62px;top:365px;line-height:12px;color:#0f66b4;letter-spacing:-0.300px;transform:scaleX(1.0124);">case</span>
<span class="t" id="t53" style="left:681.46px;top:365px;line-height:12px;color:#0f66b4;letter-spacing:-0.272px;transform:scaleX(0.9906);">-</span>
<span class="t" id="t54" style="left:687.46px;top:365px;line-height:12px;color:#0f66b4;letter-spacing:-0.300px;transform:scaleX(0.9635);">DC7)</span>
<span class="t" id="t55" style="left:659.15px;top:392px;line-height:12px;letter-spacing:0.248px;">Prov.</span>
<span class="t" id="t56" style="left:697.54px;top:392px;line-height:12px;letter-spacing:-0.300px;transform:scaleX(0.9924);">Req'd</span>
<span class="t" id="t57" style="left:735.23px;top:392px;line-height:12px;letter-spacing:-0.103px;">Util.</span>
<span class="t" id="t58" style="left:454.99px;top:413px;line-height:12px;letter-spacing:-0.014px;">In-plane axial stress</span>
<span class="t" id="t59" style="left:608.38px;top:413px;line-height:12px;letter-spacing:-0.300px;transform:scaleX(0.9570);">psi</span>
<span class="t" id="t60" style="left:657.92px;top:413px;line-height:12px;letter-spacing:0.215px;">229.7</span>
<span class="t" id="t61" style="left:696.31px;top:413px;line-height:12px;letter-spacing:-0.115px;">218.2</span>
<span class="t" id="t62" style="left:733.38px;top:413px;line-height:12px;letter-spacing:0.080px;">0.950</span>
<span class="t" id="t63" style="left:454.99px;top:432px;line-height:12px;letter-spacing:0.102px;">In-plane flexural strength</span>
<span class="t" id="t64" style="left:608.38px;top:432px;line-height:12px;letter-spacing:0.203px;">kip_ft</span>
<span class="t" id="t65" style="left:657.92px;top:432px;line-height:12px;letter-spacing:0.116px;">91.3</span>
<span class="t" id="t66" style="left:695.61px;top:432px;line-height:12px;letter-spacing:0.317px;">1.5</span>
<span class="t" id="t67" style="left:733.38px;top:432px;line-height:12px;letter-spacing:0.080px;">0.016</span>
<span class="t" id="t68" style="left:454.99px;top:451px;line-height:12px;letter-spacing:-0.024px;">In-plane shear stress</span>
<span class="t" id="t69" style="left:608.38px;top:451px;line-height:12px;letter-spacing:-0.300px;transform:scaleX(0.9570);">psi</span>
<span class="t" id="t70" style="left:657.92px;top:451px;line-height:12px;letter-spacing:0.100px;">150.0</span>
<span class="t" id="t71" style="left:696.31px;top:451px;line-height:12px;letter-spacing:-0.117px;">37.2</span>
<span class="t" id="t72" style="left:733.38px;top:451px;line-height:12px;letter-spacing:0.080px;">0.248</span>
<span class="t" id="t73" style="left:454.99px;top:470px;line-height:12px;letter-spacing:0.010px;">In-plane shear friction</span>
<span class="t" id="t74" style="left:608.38px;top:470px;line-height:12px;letter-spacing:-0.300px;transform:scaleX(0.9570);">psi</span>
<span class="t" id="t75" style="left:657.92px;top:470px;line-height:12px;letter-spacing:0.215px;">281.7</span>
<span class="t" id="t76" style="left:696.31px;top:470px;line-height:12px;letter-spacing:-0.117px;">37.2</span>
<span class="t" id="t77" style="left:733.38px;top:470px;line-height:12px;letter-spacing:0.080px;">0.132</span>
<span class="t" id="t78" style="left:455.69px;top:489px;line-height:12px;letter-spacing:-0.300px;transform:scaleX(0.9984);">Biaxial bending</span>
<span class="t" id="t79" style="left:733.38px;top:489px;line-height:12px;letter-spacing:0.080px;">0.029</span>
<span class="t" id="t80" style="left:455.69px;top:516px;line-height:12px;letter-spacing:-0.132px;">Overall design utilization</span>
<span class="t" id="t81" style="left:733.38px;top:516px;line-height:12px;letter-spacing:0.080px;">0.950</span>
<span class="t" id="t82" style="left:691.53px;top:539px;line-height:12px;letter-spacing:0.175px;">Interaction diagram...</span>
<span class="t" id="t83" style="left:451.46px;top:568px;line-height:12px;color:#0f66b4;letter-spacing:-0.090px;">Output - All cases</span>
<span class="t" id="t84" style="left:532.00px;top:598px;line-height:12px;letter-spacing:0.211px;">Preview output...</span>
<span class="t" id="t85" style="left:703.23px;top:598px;line-height:12px;letter-spacing:0.215px;">Output options...</span>
<span class="t" id="t86" style="left:705.54px;top:646px;line-height:12px;letter-spacing:-0.300px;transform:scaleX(0.9809);">Finish</span>
<span class="t" id="t87" style="left:783.77px;top:646px;line-height:12px;letter-spacing:-0.300px;transform:scaleX(0.9799);">Cancel</span>
</body></html>
